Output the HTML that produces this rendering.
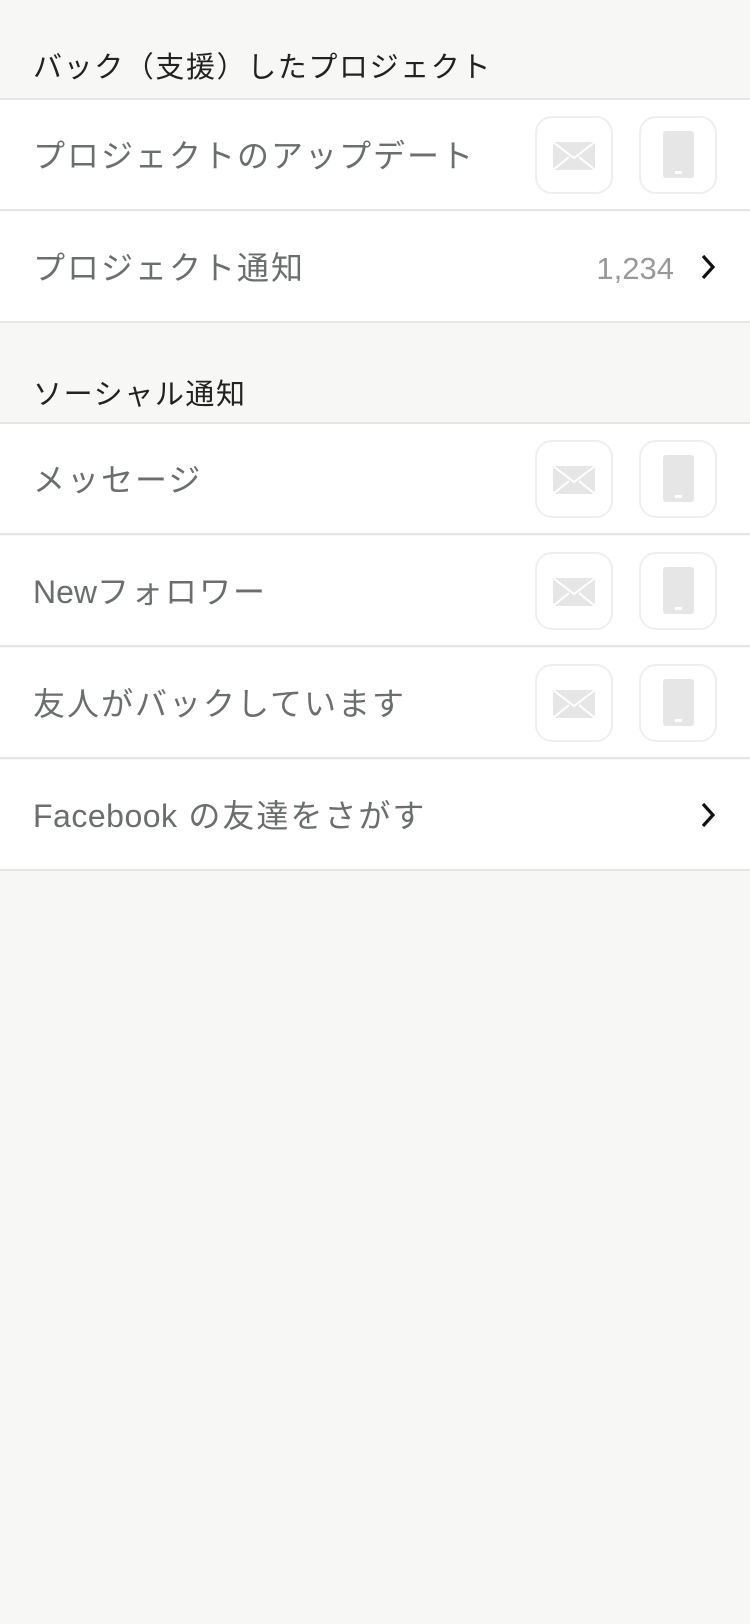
<!DOCTYPE html>
<html><head><meta charset="utf-8"><style>
body{margin:0;width:750px;height:1624px;background:#f7f7f5;font-family:"Liberation Sans","Noto Sans CJK JP",sans-serif;position:relative;overflow:hidden}
.h{position:absolute;left:33px;font-size:29px;color:#222;letter-spacing:1.6px}
.r{position:absolute;left:0;width:750px;height:111px;background:#fff;border-bottom:2px solid #e6e6e6;box-sizing:border-box}
.line{position:absolute;left:0;width:750px;height:2px;background:#e6e6e6}
.t{position:absolute;left:33px;top:2px;line-height:109px;font-size:32px;color:#6b6e6d;letter-spacing:2px}
.b{position:absolute;top:16px;width:78px;height:78px;border:2px solid #efefef;border-radius:17px;box-sizing:border-box}
.chev{position:absolute;right:34px;top:42px}
</style></head><body>
<div class="h" style="top:44px">バック（支援）したプロジェクト</div>
<div class="line" style="top:98px"></div>
<div class="r" style="top:100px"><div class="t">プロジェクトのアップデート</div>
<div class="b" style="left:535px"><svg width="74" height="74" style="position:absolute;left:0;top:0"><path d="M16 24h42v28H16z" fill="#e6e6e6"/><path d="M16 24l21 16 21-16M16 52l16-13M58 52L42 39" stroke="#fff" stroke-width="2" fill="none"/></svg></div>
<div class="b" style="left:639px"><svg width="74" height="74" style="position:absolute;left:0;top:0"><rect x="22" y="13" width="31" height="47" rx="3" fill="#e6e6e6"/><rect x="34" y="53" width="7" height="3" fill="#fff"/></svg></div>
</div>
<div class="r" style="top:212px"><div class="t">プロジェクト通知</div>
<div style="position:absolute;right:76px;top:2px;line-height:109px;font-size:31px;color:#999">1,234</div>
<svg class="chev" width="16" height="26"><path d="M3 2l10 11L3 24" stroke="#111" stroke-width="3.2" fill="none"/></svg></div>
<div class="h" style="top:371px">ソーシャル通知</div>
<div class="line" style="top:422px"></div>
<div class="r" style="top:424px"><div class="t">メッセージ</div>
<div class="b" style="left:535px"><svg width="74" height="74" style="position:absolute;left:0;top:0"><path d="M16 24h42v28H16z" fill="#e6e6e6"/><path d="M16 24l21 16 21-16M16 52l16-13M58 52L42 39" stroke="#fff" stroke-width="2" fill="none"/></svg></div>
<div class="b" style="left:639px"><svg width="74" height="74" style="position:absolute;left:0;top:0"><rect x="22" y="13" width="31" height="47" rx="3" fill="#e6e6e6"/><rect x="34" y="53" width="7" height="3" fill="#fff"/></svg></div>
</div>
<div class="r" style="top:536px"><div class="t"><span style="letter-spacing:0">New</span>フォロワー</div>
<div class="b" style="left:535px"><svg width="74" height="74" style="position:absolute;left:0;top:0"><path d="M16 24h42v28H16z" fill="#e6e6e6"/><path d="M16 24l21 16 21-16M16 52l16-13M58 52L42 39" stroke="#fff" stroke-width="2" fill="none"/></svg></div>
<div class="b" style="left:639px"><svg width="74" height="74" style="position:absolute;left:0;top:0"><rect x="22" y="13" width="31" height="47" rx="3" fill="#e6e6e6"/><rect x="34" y="53" width="7" height="3" fill="#fff"/></svg></div>
</div>
<div class="r" style="top:648px"><div class="t">友人がバックしています</div>
<div class="b" style="left:535px"><svg width="74" height="74" style="position:absolute;left:0;top:0"><path d="M16 24h42v28H16z" fill="#e6e6e6"/><path d="M16 24l21 16 21-16M16 52l16-13M58 52L42 39" stroke="#fff" stroke-width="2" fill="none"/></svg></div>
<div class="b" style="left:639px"><svg width="74" height="74" style="position:absolute;left:0;top:0"><rect x="22" y="13" width="31" height="47" rx="3" fill="#e6e6e6"/><rect x="34" y="53" width="7" height="3" fill="#fff"/></svg></div>
</div>
<div class="r" style="top:760px"><div class="t"><span style="letter-spacing:0.5px">Facebook</span> の友達をさがす</div>
<svg class="chev" width="16" height="26"><path d="M3 2l10 11L3 24" stroke="#111" stroke-width="3.2" fill="none"/></svg></div>
</body></html>
